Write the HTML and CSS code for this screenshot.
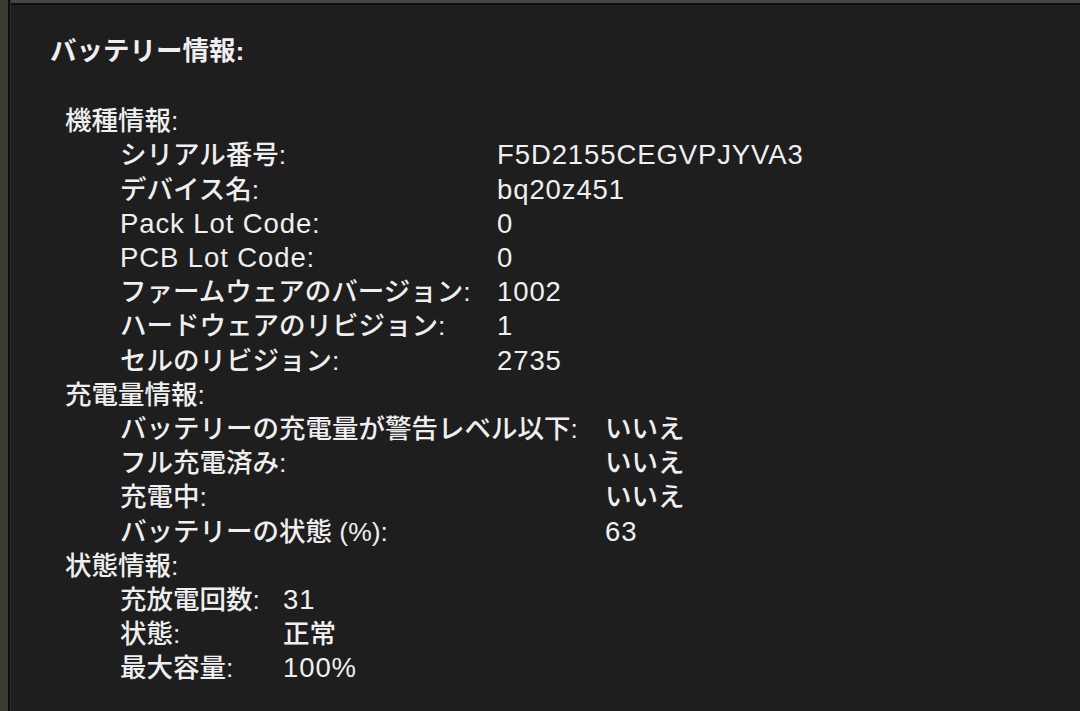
FILE: index.html
```html
<!DOCTYPE html>
<html lang="ja">
<head>
    <meta charset="UTF-8">
    <meta name="viewport" content="width=device-width, initial-scale=1.0">
    <title>バッテリー情報</title>
    <link rel="stylesheet" href="styles.css">
</head>
<body>
    <div class="sidebar-edge"></div>
    <div class="window">
        <div class="toolbar-edge"></div>
        <div class="report">
            <h2 class="report-title">バッテリー情報:</h2>

            <!-- 機種情報 -->
            <section class="group">
                <div class="group-title">機種情報:</div>
                <dl class="rows rows-model">
                    <dt>シリアル番号:</dt>
                    <dd class="latin">F5D2155CEGVPJYVA3</dd>
                    <dt>デバイス名:</dt>
                    <dd class="latin">bq20z451</dd>
                    <dt class="latin">Pack Lot Code:</dt>
                    <dd class="latin">0</dd>
                    <dt class="latin">PCB Lot Code:</dt>
                    <dd class="latin">0</dd>
                    <dt>ファームウェアのバージョン:</dt>
                    <dd class="latin">1002</dd>
                    <dt>ハードウェアのリビジョン:</dt>
                    <dd class="latin">1</dd>
                    <dt>セルのリビジョン:</dt>
                    <dd class="latin">2735</dd>
                </dl>
            </section>

            <!-- 充電量情報 -->
            <section class="group">
                <div class="group-title">充電量情報:</div>
                <dl class="rows rows-charge">
                    <dt>バッテリーの充電量が警告レベル以下:</dt>
                    <dd>いいえ</dd>
                    <dt>フル充電済み:</dt>
                    <dd>いいえ</dd>
                    <dt>充電中:</dt>
                    <dd>いいえ</dd>
                    <dt>バッテリーの状態 (%):</dt>
                    <dd class="latin">63</dd>
                </dl>
            </section>

            <!-- 状態情報 -->
            <section class="group">
                <div class="group-title">状態情報:</div>
                <dl class="rows rows-health">
                    <dt>充放電回数:</dt>
                    <dd class="latin">31</dd>
                    <dt>状態:</dt>
                    <dd>正常</dd>
                    <dt>最大容量:</dt>
                    <dd class="latin">100%</dd>
                </dl>
            </section>
        </div>
    </div>
</body>
</html>
```

FILE: styles.css
```css
* {
    margin: 0;
    padding: 0;
    box-sizing: border-box;
}

body {
    display: flex;
    height: 100vh;
    overflow: hidden;
    background-color: #1e1e1e;
    color: #efefef;
    font-family: "Liberation Sans", "Noto Sans CJK JP", sans-serif;
    font-size: 26.5px;
    font-weight: 500;
    line-height: 34.2px;
}

.sidebar-edge {
    width: 8px;
    flex-shrink: 0;
    background-color: #3b3a33;
    border-right: 2px solid #0c0c0c;
    box-sizing: content-box;
}

.window {
    flex: 1;
    display: flex;
    flex-direction: column;
    border-left: 1px solid #2c2c2c;
}

.toolbar-edge {
    height: 5px;
    background-color: #454545;
    border-bottom: 2px solid #0d0d0d;
}

.report {
    padding: 29px 0 0 39px;
}

.report-title {
    font-size: 26.5px;
    font-weight: 700;
    line-height: 34.2px;
    margin-bottom: 36px;
}

.group-title {
    padding-left: 15px;
}

.rows {
    display: grid;
    padding-left: 70px;
}

.rows dd {
    white-space: nowrap;
}

.rows-model {
    grid-template-columns: 377px auto;
}

.rows-charge {
    grid-template-columns: 485px auto;
}

.rows-health {
    grid-template-columns: 163px auto;
}

.latin {
    font-size: 27.5px;
    letter-spacing: 0.9px;
}
```
